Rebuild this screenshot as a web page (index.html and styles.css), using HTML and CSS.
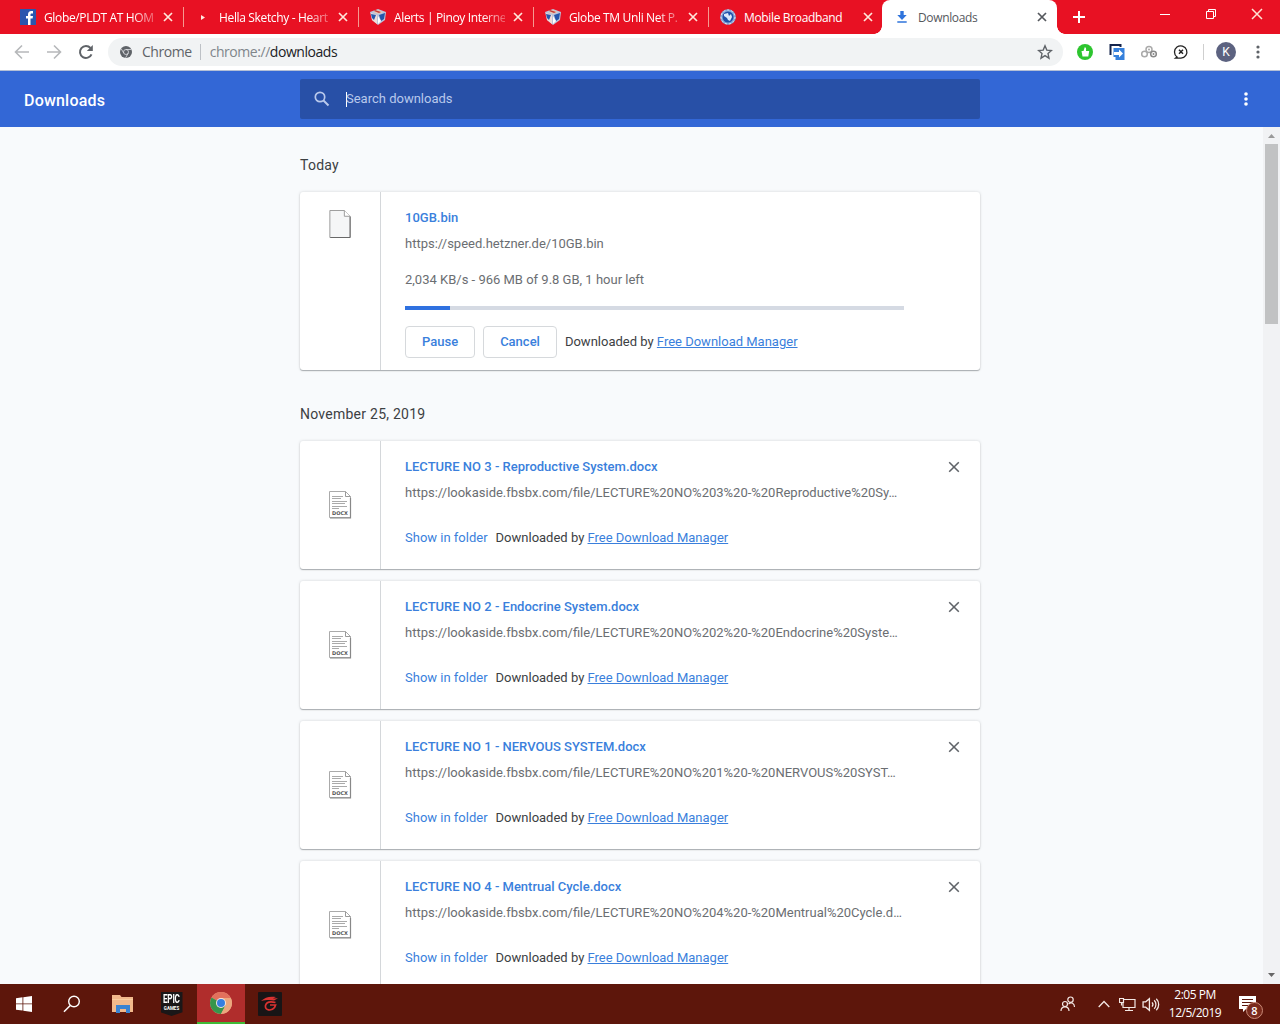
FILE: index.html
```html
<!DOCTYPE html>
<html lang="en">
<head>
  <meta charset="UTF-8" />
  <meta name="viewport" content="width=device-width, initial-scale=1.0"/>
  <title>Downloads</title>
  <link rel="stylesheet" href="styles.css">
</head>
<body>
  <!-- Shared icons -->
  <svg class="icon-defs" width="0" height="0">
    <symbol id="icon-close" viewBox="0 0 10 10">
      <path d="M1 1l8 8M9 1l-8 8" fill="none" stroke="currentColor"/>
    </symbol>
    <symbol id="icon-cube" viewBox="0 0 16 16">
      <path d="M0 3l8-3 8 3-1 8-7 5-6-5z" fill="#b9c4dc"/>
      <path d="M1 4l6 2v9l-5-4z" fill="#f0dcd8"/>
      <path d="M1 5l5 1-2 5-2-2zM9 6l6-2-1 6-3 2z" fill="#2456ac"/>
      <path d="M8 7l3 5-3 3z" fill="#fff"/>
      <path d="M3 3l5-2 5 2-5 2z" fill="#e9c7b4"/>
      <path d="M5 1l6 2-2 1-5-2z" fill="#c33b35"/>
    </symbol>
    <symbol id="icon-docx" viewBox="0 0 24 30">
      <path d="M1.500 1.500h16l5 5v21h-21z" fill="#fff" stroke="#aaa"/>
      <path d="M17.500 1.500v5h5" fill="none" stroke="#999"/>
      <path d="M22.500 8v20H2" fill="none" stroke="#888" stroke-width="1.200"/>
      <path d="M4 6.500h11M4 8.500h9M4 11.500h15M4 13.500h13M4 16.500h15M4 18.500h7" stroke="#aaa" fill="none"/>
    </symbol>
  </svg>

  <div class="tab-strip">
    <div class="tab">
      <svg class="favicon" viewBox="0 0 16 16"><rect width="16" height="16" fill="#2a55ae"/><path d="M8 16V9.500H6V7h2V5.500C8 3.300 9.300 2 11.300 2H13v2.500h-1.200c-.9 0-1.300.4-1.300 1.200V7H13l-.4 2.500h-2.100V16z" fill="#fff"/></svg>
      <span class="tab-title fade">Globe/PLDT AT HOM</span>
      <svg class="tab-close"><use href="#icon-close"/></svg>
    </div>
    <div class="tab">
      <svg class="favicon" viewBox="0 0 16 16"><path d="M6 6l4 2.500L6 11z" fill="#ffe9e0"/></svg>
      <span class="tab-title fade">Hella Sketchy - Heart</span>
      <svg class="tab-close"><use href="#icon-close"/></svg>
    </div>
    <div class="tab">
      <svg class="favicon"><use href="#icon-cube"/></svg>
      <span class="tab-title fade">Alerts | Pinoy Interne</span>
      <svg class="tab-close"><use href="#icon-close"/></svg>
    </div>
    <div class="tab">
      <svg class="favicon"><use href="#icon-cube"/></svg>
      <span class="tab-title fade">Globe TM Unli Net P.</span>
      <svg class="tab-close"><use href="#icon-close"/></svg>
    </div>
    <div class="tab">
      <svg class="favicon" viewBox="0 0 16 16"><circle cx="8" cy="8" r="7.800" fill="#86a6d8"/><circle cx="8" cy="8" r="7" fill="none" stroke="#dce6f5" stroke-dasharray="2 2"/><circle cx="8" cy="8" r="5.500" fill="#1f50aa"/><path d="M4 5l4-1 1 3 2-2 1 3-2 4-2-1-1-2-3-2z" fill="#dbe8fa"/></svg>
      <span class="tab-title">Mobile Broadband</span>
      <svg class="tab-close"><use href="#icon-close"/></svg>
    </div>
    <div class="tab active">
      <svg class="favicon" viewBox="0 0 16 16"><path d="M6.300 2h3.400v4h3L8 11 3.300 6h3zM3.300 12.300h9.400v1.500H3.300z" fill="#2f74dc"/></svg>
      <span class="tab-title">Downloads</span>
      <svg class="tab-close"><use href="#icon-close"/></svg>
    </div>
    <svg class="new-tab" viewBox="0 0 12 12"><path d="M6 0v12M0 6h12" stroke="#fff" stroke-width="2"/></svg>
    <div class="window-buttons">
      <svg viewBox="0 0 12 12"><path d="M1 6.500h10" stroke="#fff"/></svg>
      <svg viewBox="0 0 12 12"><path d="M1.500 3.500h7v7h-7zM3.500 3.500v-2h7v7h-2" fill="none" stroke="#fff"/></svg>
      <svg viewBox="0 0 12 12"><path d="M1 1l10 10M11 1L1 11" stroke="#ffe3d3" stroke-width="1.500"/></svg>
    </div>
  </div>

  <div class="toolbar">
    <svg class="nav-icon disabled" viewBox="0 0 16 16"><path d="M15 8H2M8 1.500L1.500 8 8 14.500" /></svg>
    <svg class="nav-icon disabled" viewBox="0 0 16 16"><path d="M1 8h13M8 1.500L14.500 8 8 14.500" /></svg>
    <svg class="nav-icon" viewBox="0 0 16 16"><path d="M13.500 10.300A6 6 0 1 1 12.500 4" /><path d="M14.800 1v6h-6z" class="nav-fill"/></svg>
    <div class="omnibox">
      <svg class="site-icon" viewBox="0 0 12 12"><circle cx="6" cy="6" r="6" fill="#5f6368"/><circle cx="6" cy="6" r="2.500" fill="none" stroke="#dfe1e4" stroke-width=".8"/><path d="M6 3.500h5.400M3.800 7.200L1.200 2.800M8.200 7.200L5.600 11.800" stroke="#dfe1e4" stroke-width=".8"/></svg>
      <span class="site-name">Chrome</span>
      <span class="url"><span class="scheme">chrome://</span>downloads</span>
      <svg class="star" viewBox="0 0 16 16"><path d="M8 1.800l1.800 4.300 4.700.4-3.500 3.100 1 4.600-4-2.500-4 2.500 1-4.600L1.500 6.500l4.700-.4z" fill="none" stroke="#5f6368" stroke-width="1.400"/></svg>
    </div>
    <div class="extensions">
      <svg viewBox="0 0 16 16"><circle cx="8" cy="8" r="8" fill="#2dc52f"/><path d="M4.500 7h2l1.200-3.800c1.300 0 1.700 1 1.300 3.800h3.200l-.9 5.500H5.500z" fill="#fff"/></svg>
      <svg viewBox="0 0 16 16"><path d="M1.500 11V1h10v2" fill="none" stroke="#15244d" stroke-width="2"/><path d="M4.500 4h11v12h-9v-3h-2z" fill="#3580dc"/><path d="M5 8h5V5.500l4 4-4 4V11H5z" fill="#fff"/></svg>
      <svg viewBox="0 0 16 16"><g fill="none" stroke="#aaa" stroke-width="1.500"><circle cx="8" cy="5.500" r="3"/><circle cx="3.500" cy="10" r="2.800"/><circle cx="12.500" cy="10" r="2.800" stroke="#888"/></g><circle cx="8" cy="5.500" r="1" fill="#aaa"/><circle cx="12.500" cy="10" r="1" fill="#888"/></svg>
      <svg viewBox="0 0 16 16"><path d="M4 13A6.200 6.200 0 1 1 8 14.200H2.500z" fill="none" stroke="#222" stroke-width="1.300"/><path d="M6 5.700l4 4M10 5.700l-4 4" stroke="#222" stroke-width="1.500"/></svg>
    </div>
    <span class="avatar">K</span>
    <svg class="browser-menu" viewBox="0 0 4 14"><circle cx="2" cy="2" r="1.600"/><circle cx="2" cy="7" r="1.600"/><circle cx="2" cy="12" r="1.600"/></svg>
  </div>

  <div class="page-header">
    <h1>Downloads</h1>
    <div class="search">
      <svg viewBox="0 0 16 16"><circle cx="6" cy="6" r="4.700" fill="none" stroke="currentColor" stroke-width="1.700"/><path d="M9.500 9.500l5 5" stroke="currentColor" stroke-width="2"/></svg>
      <span class="cursor"></span>
      <span class="search-text">Search downloads</span>
    </div>
    <svg class="page-menu" viewBox="0 0 4 14"><circle cx="2" cy="2" r="1.800"/><circle cx="2" cy="7" r="1.800"/><circle cx="2" cy="12" r="1.800"/></svg>
  </div>

  <div class="page">
    <div class="downloads">
      <h2>Today</h2>
      <div class="card in-progress">
        <div class="file-icon">
          <svg class="blank-file" viewBox="0 0 22 29"><path d="M.5.5h15l6 6v22H.5z" fill="#f5f6f7" stroke="#999"/><path d="M15.500.5v6h6" fill="#fff" stroke="#999"/><path d="M21.500 7v21.500H1" fill="none" stroke="#666"/></svg>
        </div>
        <div class="details">
          <div class="name">10GB.bin</div>
          <div class="source">https://speed.hetzner.de/10GB.bin</div>
          <div class="status">2,034 KB/s - 966 MB of 9.8 GB, 1 hour left</div>
          <div class="progress"><div class="progress-bar" style="width: 9%"></div></div>
          <div class="actions">
            <button>Pause</button>
            <button>Cancel</button>
            <span>Downloaded by <a href="#">Free Download Manager</a></span>
          </div>
        </div>
      </div>

      <h2>November 25, 2019</h2>
      <div class="card">
        <div class="file-icon"><svg><use href="#icon-docx"/></svg><span>DOCX</span></div>
        <div class="details">
          <div class="name">LECTURE NO 3 - Reproductive System.docx</div>
          <div class="source">https://lookaside.fbsbx.com/file/LECTURE%20NO%203%20-%20Reproductive%20Sy…</div>
          <div class="actions">
            <span class="show">Show in folder</span>
            <span>Downloaded by <a href="#">Free Download Manager</a></span>
          </div>
        </div>
        <svg class="remove"><use href="#icon-close"/></svg>
      </div>
      <div class="card">
        <div class="file-icon"><svg><use href="#icon-docx"/></svg><span>DOCX</span></div>
        <div class="details">
          <div class="name">LECTURE NO 2 - Endocrine System.docx</div>
          <div class="source">https://lookaside.fbsbx.com/file/LECTURE%20NO%202%20-%20Endocrine%20Syste…</div>
          <div class="actions">
            <span class="show">Show in folder</span>
            <span>Downloaded by <a href="#">Free Download Manager</a></span>
          </div>
        </div>
        <svg class="remove"><use href="#icon-close"/></svg>
      </div>
      <div class="card">
        <div class="file-icon"><svg><use href="#icon-docx"/></svg><span>DOCX</span></div>
        <div class="details">
          <div class="name">LECTURE NO 1 - NERVOUS SYSTEM.docx</div>
          <div class="source">https://lookaside.fbsbx.com/file/LECTURE%20NO%201%20-%20NERVOUS%20SYST…</div>
          <div class="actions">
            <span class="show">Show in folder</span>
            <span>Downloaded by <a href="#">Free Download Manager</a></span>
          </div>
        </div>
        <svg class="remove"><use href="#icon-close"/></svg>
      </div>
      <div class="card">
        <div class="file-icon"><svg><use href="#icon-docx"/></svg><span>DOCX</span></div>
        <div class="details">
          <div class="name">LECTURE NO 4 - Mentrual Cycle.docx</div>
          <div class="source">https://lookaside.fbsbx.com/file/LECTURE%20NO%204%20-%20Mentrual%20Cycle.d…</div>
          <div class="actions">
            <span class="show">Show in folder</span>
            <span>Downloaded by <a href="#">Free Download Manager</a></span>
          </div>
        </div>
        <svg class="remove"><use href="#icon-close"/></svg>
      </div>
    </div>
    <div class="scrollbar">
      <svg viewBox="0 0 17 17"><path d="M5 11l3.500-4 3.500 4z" fill="#999"/></svg>
      <div class="thumb"></div>
      <svg viewBox="0 0 17 17"><path d="M5 6h7l-3.500 4z" fill="#666"/></svg>
    </div>
  </div>

  <div class="taskbar">
    <div class="task"><svg width="16" height="16" viewBox="0 0 16 16"><path d="M0 2.200L6.500 1.300v6.200H0zM7.300 1.200L16 0v7.500H7.300zM0 8.300h6.500v6.300L0 13.700zM7.300 8.300H16V16l-8.700-1.200z" fill="#fff"/></svg></div>
    <div class="task"><svg width="18" height="18" viewBox="0 0 18 18"><circle cx="11" cy="6.500" r="5.300" fill="none" stroke="#fff" stroke-width="1.400"/><path d="M7.200 10.500L1 16.800" stroke="#fff" stroke-width="1.500"/></svg></div>
    <div class="task wide"><svg width="22" height="18" viewBox="0 0 22 18"><path d="M0 0h8l1.500 2H21v15H0z" fill="#f2b98c"/><path d="M0 4h21v1H0z" fill="#f9cfa0"/><path d="M4 18v-8h14v8h-4v-4H8v4z" fill="#3a83d2"/></svg></div>
    <div class="task narrow">
      <div class="epic"><b>EPIC</b><small>GAMES</small></div>
    </div>
    <div class="task active">
      <svg width="22" height="22" viewBox="0 0 22 22"><circle cx="11" cy="11" r="11" fill="#e8a087"/><path d="M11 11L1.500 5.500A11 11 0 0 1 20.500 5.500z" fill="#e2705c"/><path d="M11 11L1.500 5.500A11 11 0 0 0 11 22l4.500-8.500z" fill="#36964b"/><path d="M11 6h9.800A11 11 0 0 1 11 22l4.500-8.500z" fill="#eca77d"/><circle cx="11" cy="11" r="5" fill="#f4e6df"/><circle cx="11" cy="11" r="4" fill="#367fe0"/></svg>
    </div>
    <div class="task last"><svg width="24" height="24" viewBox="0 0 24 24"><rect width="24" height="24" rx="1" fill="#181516"/><path d="M3 9c4-4 9-5 15-4l-3 1.500 5-.2-4 2.200C11 7.500 8 8 3 9z" fill="#d93230"/><path d="M17.500 10.500c-4-1-9-1-10 3-1 5 6 6 9 2l1-2.500H12" fill="none" stroke="#d93230" stroke-width="1.700"/></svg></div>

    <div class="tray">
      <svg class="people" viewBox="0 0 16 16"><g fill="none" stroke="#f3e8e5" stroke-width="1.200"><circle cx="10.500" cy="3.700" r="2.700"/><path d="M8.500 8c3-2.500 6-.5 6 3"/><circle cx="5" cy="8" r="2.500"/><path d="M1 15c0-5.500 8-5.500 8 0"/></g></svg>
      <svg class="chevron" viewBox="0 0 12 8"><path d="M.7 7L6 1.500 11.300 7" fill="none" stroke="#f3e8e5" stroke-width="1.300"/></svg>
      <svg class="network" viewBox="0 0 17 15"><path d="M5 2.500h11v8H4V6M10 10.500v3M6 13.500h8M.500 1.500h4v4h-4zM2.500 5.500v3" fill="none" stroke="#f3e8e5" stroke-width="1.200"/></svg>
      <svg class="volume" viewBox="0 0 17 14"><path d="M1 4.500h2.500L7 1.500v11L3.500 9.500H1z" fill="none" stroke="#f3e8e5" stroke-width="1.200"/><path d="M9.500 5c1 1.200 1 2.800 0 4M11.500 3c2.200 2 2.200 6 0 8M13.500 1.500c3 3 3 8 0 11" fill="none" stroke="#f3e8e5" stroke-width="1.200"/></svg>
      <div class="clock"><span>2:05 PM</span><span>12/5/2019</span></div>
      <div class="notifications">
        <svg viewBox="0 0 17 16"><path d="M0 0h17v13H7l-3 3v-3H0z" fill="#fff"/><path d="M3 3.500h11M3 6.500h11M3 9.500h7" stroke="#5d160b"/></svg>
        <span class="badge">8</span>
      </div>
    </div>
  </div>
</body>
</html>
```
FILE: styles.css
```css
* {
  box-sizing: border-box;
}

body {
  margin: 0;
  height: 1024px;
  overflow: hidden;
  display: flex;
  flex-direction: column;
  font-family: Roboto, sans-serif;
  font-size: 13px;
  background-color: #f8fafc;
  color: #3c4043;
}

svg {
  display: block;
  flex: none;
}

.icon-defs {
  position: absolute;
}

/* Tabs */
.tab-strip {
  display: flex;
  flex: none;
  height: 34px;
  padding-left: 8px;
  background: #e81123;
  font-family: "Open Sans", sans-serif;
  font-size: 12px;
}

.tab {
  position: relative;
  display: flex;
  align-items: center;
  width: 175px;
  padding-left: 12px;
  color: #fff;
}

.tab + .tab::before {
  content: "";
  position: absolute;
  left: 0;
  top: 7px;
  width: 1px;
  height: 20px;
  background: #f59a90;
}

.favicon {
  width: 16px;
  height: 16px;
}

.tab-title {
  width: 111px;
  margin: 0 8px;
  white-space: nowrap;
  letter-spacing: -0.35px;
}

.tab-title.fade {
  -webkit-mask-image: linear-gradient(to right, #000 88px, rgba(0, 0, 0, 0.3) 111px);
  mask-image: linear-gradient(to right, #000 88px, rgba(0, 0, 0, 0.3) 111px);
}

.tab-close {
  width: 10px;
  height: 10px;
  color: #ffe6da;
  stroke-width: 1.700px;
}

.tab.active {
  margin-left: -1px;
  background: #fff;
  border-radius: 8px 8px 0 0;
  color: #55585d;
}

.tab.active .tab-close {
  color: #55585d;
}

.tab.active::before,
.tab.active::after {
  content: "";
  position: absolute;
  left: -8px;
  top: auto;
  bottom: 0;
  width: 8px;
  height: 8px;
  background: radial-gradient(circle at 0 0, transparent 7.500px, #fff 8px);
}

.tab.active::after {
  left: auto;
  right: -8px;
  background: radial-gradient(circle at 100% 0, transparent 7.500px, #fff 8px);
}

.new-tab {
  width: 12px;
  height: 12px;
  margin: 11px 0 0 16px;
}

.window-buttons {
  display: flex;
  gap: 34px;
  margin: 8px 17px 0 auto;
}

.window-buttons svg {
  width: 12px;
  height: 12px;
}

/* Toolbar */
.toolbar {
  display: flex;
  flex: none;
  align-items: center;
  height: 37px;
  padding: 0 20px 0 14px;
  background: #fff;
  border-bottom: 1px solid #b4bfd6;
}

.nav-icon {
  width: 16px;
  height: 16px;
  margin-right: 16px;
  fill: none;
  stroke: #5f6368;
  stroke-width: 2;
}

.nav-icon.disabled {
  stroke: #b6b8ba;
  stroke-width: 1.600;
}

.nav-fill {
  fill: #5f6368;
  stroke: none;
}

.omnibox {
  display: flex;
  align-items: center;
  width: 955px;
  height: 28px;
  margin-left: -2px;
  padding: 0 10px 0 12px;
  border-radius: 14px;
  background: #f1f3f4;
  font-family: "Open Sans", sans-serif;
  font-size: 14px;
}

.site-icon {
  width: 12px;
  height: 12px;
}

.site-name {
  margin-left: 10px;
  padding-right: 8px;
  border-right: 1px solid #bdc1c6;
  line-height: 16px;
  color: #5f6368;
  letter-spacing: -0.45px;
}

.url {
  margin: -1px 0 0 9px;
  color: #202124;
  letter-spacing: -0.45px;
}

.scheme {
  color: #80868b;
}

.star {
  width: 16px;
  height: 16px;
  margin-left: auto;
}

.extensions {
  display: flex;
  gap: 16px;
  margin-left: 14px;
  padding-right: 14px;
  border-right: 1px solid #cfcfcf;
}

.extensions svg {
  width: 16px;
  height: 16px;
}

.avatar {
  width: 20px;
  height: 20px;
  margin-left: 12px;
  border-radius: 50%;
  background: #5c6280;
  color: #fff;
  font-size: 12px;
  line-height: 20px;
  text-align: center;
}

.browser-menu {
  width: 4px;
  height: 14px;
  margin-left: auto;
  fill: #5f6368;
}

/* Page header */
.page-header {
  display: flex;
  flex: none;
  align-items: center;
  height: 56px;
  padding: 0 32px 0 24px;
  background: #3367d6;
  color: #fff;
}

.page-header h1 {
  width: 276px;
  margin: 2px 0 0;
  font-size: 16px;
  font-weight: 500;
  letter-spacing: 0.2px;
}

.search {
  display: flex;
  align-items: center;
  width: 680px;
  height: 40px;
  padding-left: 14px;
  border-radius: 2px;
  background: #2850a7;
  color: #b9c9ec;
}

.search svg {
  width: 16px;
  height: 16px;
}

.cursor {
  width: 1px;
  height: 15px;
  margin-left: 16px;
  background: #fff;
}

.search-text {
  margin-top: -2px;
  margin-left: -1px;
}

.page-menu {
  width: 4px;
  height: 14px;
  margin-left: auto;
  fill: #fff;
}

/* Download list */
.page {
  display: flex;
  flex: 1;
  min-height: 0;
  overflow: hidden;
}

.downloads {
  width: 680px;
  margin-left: 300px;
}

h2 {
  margin: 29px 0 17px;
  font-size: 14px;
  line-height: 19px;
  font-weight: 400;
  letter-spacing: 0.25px;
}

.card + h2 {
  margin-top: 35px;
}

.card {
  display: flex;
  height: 128px;
  margin-bottom: 12px;
  border-radius: 3px;
  background: #fff;
  box-shadow: 0 1px 1px #a9adb1, 0 0 3px rgba(60, 64, 67, 0.2);
}

.card.in-progress {
  height: 178px;
}

.file-icon {
  position: relative;
  display: flex;
  align-items: center;
  justify-content: center;
  width: 81px;
  border-right: 1px solid #d4d7da;
}

.in-progress .file-icon {
  align-items: flex-start;
  padding-top: 18px;
}

.file-icon svg {
  width: 24px;
  height: 30px;
}

.file-icon .blank-file {
  width: 22px;
  height: 28px;
  margin-right: 1px;
}

.file-icon span {
  position: absolute;
  left: 32px;
  top: 69px;
  font-family: "DejaVu Sans", sans-serif;
  font-size: 5px;
  font-weight: bold;
  line-height: 7px;
  color: #555;
}

.details {
  width: 523px;
  padding: 16px 0 0 24px;
}

.name,
.source,
.status {
  height: 20px;
  line-height: 20px;
  white-space: nowrap;
}

.name {
  font-weight: 500;
  color: #3a7fdc;
}

.source {
  margin-top: 6px;
  color: #6b6e72;
}

.status {
  margin-top: 16px;
  color: #6b6e72;
}

.progress {
  height: 4px;
  margin-top: 16px;
  background: #d5dae3;
}

.progress-bar {
  height: 4px;
  background: #2f71e0;
}

.actions {
  display: flex;
  align-items: center;
  gap: 8px;
  height: 32px;
  margin-top: 18px;
}

.in-progress .actions {
  margin-top: 16px;
}

.in-progress .actions span {
  padding-bottom: 2px;
}

.actions button {
  height: 32px;
  padding: 0 16px 2px;
  border: 1px solid #d6d9dc;
  border-radius: 4px;
  background: #fff;
  color: #3a7fdc;
  font-family: inherit;
  font-size: 13px;
  font-weight: 500;
}

.actions a,
.show {
  color: #3a7fdc;
}

.remove {
  width: 12px;
  height: 12px;
  margin: 20px 0 0 44px;
  color: #5f6368;
  stroke-width: 1.300px;
}

.scrollbar {
  display: flex;
  flex-direction: column;
  width: 17px;
  margin-left: auto;
  background: #f1f2f4;
}

.scrollbar svg {
  width: 17px;
  height: 17px;
}

.scrollbar svg:last-child {
  margin-top: auto;
}

.thumb {
  width: 13px;
  height: 180px;
  margin-left: 2px;
  background: #c1c2c3;
}

/* Taskbar */
.taskbar {
  display: flex;
  flex: none;
  height: 40px;
  background: #5d160b;
  font-family: "Open Sans", sans-serif;
  color: #fff;
}

.task {
  display: flex;
  align-items: center;
  justify-content: center;
  width: 48px;
}

.task.wide {
  width: 53px;
}

.task.narrow {
  padding-right: 3px;
}

.task.last {
  width: 50px;
}

.task.active {
  border-bottom: 2px solid #3fba36;
  background: #b02d2c;
}

.epic {
  display: flex;
  flex-direction: column;
  align-items: center;
  width: 22px;
  height: 24px;
  background: #1a1718;
  clip-path: polygon(0 0, 100% 0, 100% 84%, 50% 100%, 0 84%);
  font-family: Roboto, sans-serif;
}

.epic b {
  font-size: 12px;
  line-height: 14px;
  letter-spacing: -0.3px;
  transform: scaleX(0.68);
}

.epic small {
  font-size: 4.500px;
  font-weight: 700;
  line-height: 5px;
}

.tray {
  display: flex;
  align-items: center;
  margin-left: auto;
  padding-right: 5px;
}

.people {
  width: 16px;
  height: 16px;
}

.chevron {
  width: 12px;
  height: 8px;
  margin-left: 22px;
}

.network {
  width: 17px;
  height: 15px;
  margin-left: 9px;
}

.volume {
  width: 18px;
  height: 15px;
  margin-left: 6px;
}

.clock {
  display: flex;
  flex-direction: column;
  align-items: center;
  width: 54px;
  margin-left: 8px;
  font-size: 12px;
  line-height: 18px;
  letter-spacing: -0.5px;
  white-space: nowrap;
}

.notifications {
  position: relative;
  width: 36px;
  margin-left: 17px;
}

.notifications svg {
  width: 17px;
  height: 16px;
}

.badge {
  position: absolute;
  left: 7px;
  top: 6px;
  width: 17px;
  height: 17px;
  border: 1px solid #c98a78;
  border-radius: 50%;
  background: #7a2a1c;
  font-size: 11px;
  font-weight: 600;
  line-height: 15px;
  text-align: center;
}
```
